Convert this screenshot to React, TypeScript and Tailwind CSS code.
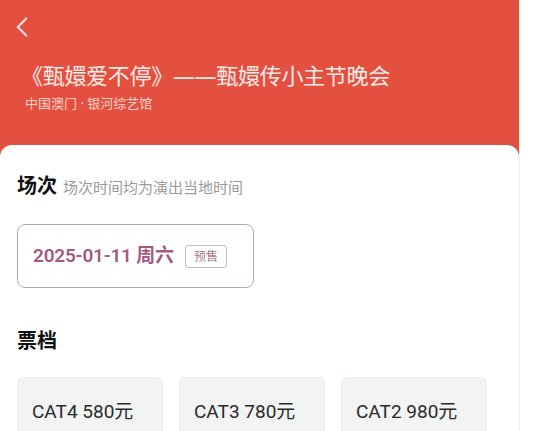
import { ChevronLeft } from "lucide-react"

const tiers = [
  { id: 4, label: "CAT4 580元" },
  { id: 3, label: "CAT3 780元" },
  { id: 2, label: "CAT2 980元" },
]

export default function App() {
  return (
    <div
      className="flex w-[533px] h-[431px] overflow-hidden bg-white"
      style={{ fontFamily: '"Noto Sans", "Noto Sans CJK SC", sans-serif' }}
    >
      <div className="flex flex-col w-[519px] bg-[#e4503f]">
        {/* 顶部红色头图 */}
        <div className="shrink-0 flex flex-col pl-[13px] pt-[10px] h-[145px]">
          <ChevronLeft className="w-[34px] h-[34px] text-[#fbe4dc] -ml-[8px]" strokeWidth={1.5} />
          <h1 className="mt-[16px] pl-[8px] text-[22px] leading-[30px] text-[#fcebe6] tracking-[-0.3px]">
            《甄嬛爱不停》——甄嬛传小主节晚会
          </h1>
          <p className="mt-[3px] pl-[12px] text-[13px] leading-[20px] text-[#f9d3cb]">
            中国澳门 · 银河综艺馆
          </p>
        </div>

        {/* 白色内容卡片 */}
        <div className="flex-1 bg-white rounded-t-[12px] px-[17px] pt-[28px]">
          <div className="flex items-end gap-[6px]">
            <span className="text-[20px] leading-[26px] font-bold text-[#111]">场次</span>
            <span className="text-[15px] leading-[24px] text-[#9a9a9a]">场次时间均为演出当地时间</span>
          </div>

          <div className="mt-[25px] w-[237px] h-[64px] rounded-[8px] border border-[#b8a6ae] flex items-center pl-[15px] gap-[11px]">
            <span
              className="text-[19px] font-semibold text-[#a35a80] tracking-[-0.2px]"
              style={{ fontFamily: 'Roboto, "Noto Sans CJK SC", sans-serif' }}
            >
              2025-01-11 周六
            </span>
            <span className="h-[23px] px-[8px] rounded-[3px] border border-[#c9b9c1] text-[12px] leading-[21px] text-[#a87a92]">
              预售
            </span>
          </div>

          <div className="mt-[40px] text-[20px] leading-[26px] font-bold text-[#111]">票档</div>

          <div className="mt-[23px] flex gap-[16px]">
            {tiers.map((t) => (
              <div
                key={t.id}
                className="w-[146px] h-[70px] rounded-[6px] bg-[#f2f4f4] border border-[#eceeee] pl-[14px] pt-[20px] text-[19px] text-[#2a2a2a]"
                style={{ fontFamily: 'Roboto, "Noto Sans CJK SC", sans-serif' }}
              >
                {t.label}
              </div>
            ))}
          </div>
        </div>
      </div>
      <div className="w-[14px] border-l border-[#eeeeee] bg-white" />
    </div>
  )
}
